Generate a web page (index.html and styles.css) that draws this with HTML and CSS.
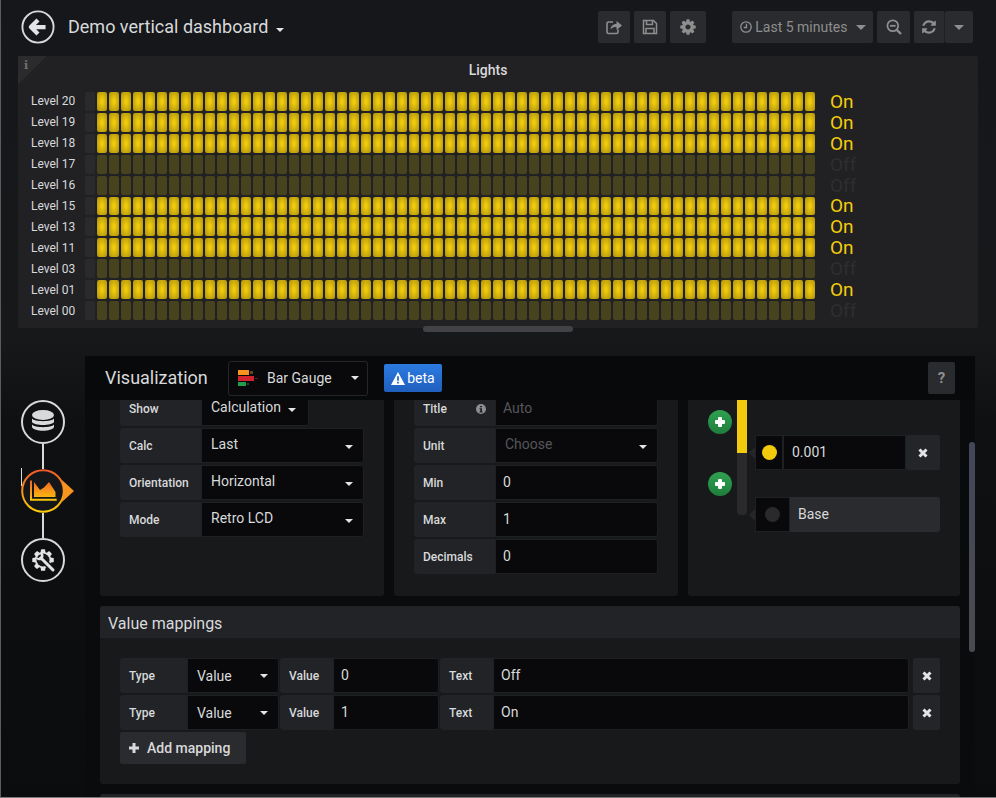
FILE: index.html
```html
<!DOCTYPE html>
<html lang="en">
<head>
    <meta charset="UTF-8">
    <title>Demo vertical dashboard</title>
    <link rel="stylesheet" href="styles.css">
</head>
<body>
    <header class="navbar">
        <svg class="back" width="34" height="34" viewBox="0 0 36 36">
            <circle cx="18" cy="18" r="16.500" fill="none" stroke="#d8d9da" stroke-width="2"/>
            <path d="M18 10.500 L10.500 18 L18 25.500 M11 18 H26" fill="none" stroke="#e3e4e5" stroke-width="4.500" stroke-linejoin="round"/>
        </svg>
        <h1 class="dash-title">Demo vertical dashboard</h1>
        <span class="caret caret-title"></span>
        <div class="nav-group">
            <button class="nav-btn btn-share">
                <svg width="18" height="18" viewBox="0 0 18 18" fill="none" stroke="#8e8e8e" stroke-width="1.600">
                    <path d="M8 4 H3.500 Q2 4 2 5.500 V14 Q2 15.500 3.500 15.500 H11.500 Q13 15.500 13 14 V11.500"/>
                    <path d="M5.500 11.500 C6 7.500 8.500 6 11.500 6 V3 L17 7.500 L11.500 12 V9 C9 9 7 9.500 5.500 11.500 Z" fill="#8e8e8e" stroke="none"/>
                </svg>
            </button>
            <button class="nav-btn btn-save">
                <svg width="16" height="16" viewBox="0 0 16 16" fill="none" stroke="#8e8e8e" stroke-width="1.500">
                    <path d="M1.500 1.500 H11.500 L14.500 4.500 V14.500 H1.500 Z"/>
                    <path d="M4.500 1.500 V5.500 H10.500 V1.500 M4 14.500 V9.500 H12 V14.500"/>
                </svg>
            </button>
            <button class="nav-btn btn-settings">
                <svg width="18" height="18" viewBox="0 0 1792 1792" fill="#8e8e8e"><path d="M1152 896q0-106-75-181t-181-75-181 75-75 181 75 181 181 75 181-75 75-181zm512-109v222q0 12-8 23t-20 13l-185 28q-19 54-39 91 35 50 107 138 10 12 10 25t-9 23q-27 37-99 108t-94 71q-12 0-26-9l-138-108q-44 23-91 38-16 136-29 186-7 28-36 28h-222q-14 0-24.500-8.500t-11.500-21.500l-28-184q-49-16-90-37l-141 107q-10 9-25 9-14 0-25-11-126-114-165-168-7-10-7-23 0-12 8-23 15-21 51-66.500t54-70.500q-27-50-41-99l-183-27q-13-2-21-12.500t-8-23.500v-222q0-12 8-23t19-13l186-28q14-46 39-92-40-57-107-138-10-12-10-24 0-10 9-23 26-36 98.500-107.500t94.500-71.500q13 0 26 10l138 107q44-23 91-38 16-136 29-186 7-28 36-28h222q14 0 24.500 8.500t11.500 21.500l28 184q49 16 90 37l142-107q9-9 24-9 13 0 25 10 129 119 165 170 7 8 7 22 0 12-8 23-15 21-51 66.500t-54 70.500q26 50 41 98l183 28q13 2 21 12.500t8 23.500z"/></svg>
            </button>
        </div>
        <button class="nav-btn btn-time">
            <svg width="12" height="12" viewBox="0 0 12 12" fill="none" stroke="#8e8e8e" stroke-width="1.300">
                <circle cx="6" cy="6" r="5.200"/>
                <path d="M6.500 2.800 V6.500 H3.800"/>
            </svg>
            <span class="time-text">Last 5 minutes</span>
            <span class="caret caret-grey"></span>
        </button>
        <button class="nav-btn btn-zoom">
            <svg width="16" height="16" viewBox="0 0 16 16" fill="none" stroke="#8e8e8e" stroke-width="1.800">
                <circle cx="6.800" cy="6.800" r="5.400"/>
                <path d="M10.800 10.800 L15 15" stroke-width="2.400"/>
                <path d="M4 6.800 H9.600"/>
            </svg>
        </button>
        <div class="refresh-group">
            <button class="nav-btn btn-refresh">
                <svg width="16" height="16" viewBox="0 0 1792 1792" fill="#8e8e8e"><path d="M1639 1056q0 5-1 7-64 268-268 434.500t-478 166.500q-146 0-282.500-55t-243.500-157l-129 129q-19 19-45 19t-45-19-19-45v-448q0-26 19-45t45-19h448q26 0 45 19t19 45-19 45l-137 137q71 66 161 102t187 36q134 0 250-65t186-179q11-17 53-117 8-23 30-23h192q13 0 22.500 9.500t9.500 22.500zm25-800v448q0 26-19 45t-45 19h-448q-26 0-45-19t-19-45 19-45l138-138q-148-137-349-137-134 0-250 65t-186 179q-11 17-53 117-8 23-30 23h-199q-13 0-22.500-9.500t-9.500-22.500v-7q65-268 270-434.500t480-166.500q146 0 284 55.500t245 156.500l130-129q19-19 45-19t45 19 19 45z"/></svg>
            </button>
            <button class="nav-btn btn-interval"><span class="caret caret-grey"></span></button>
        </div>
    </header>

    <section class="panel">
        <div class="panel-corner"><span class="corner-i">i</span></div>
        <h2 class="panel-title">Lights</h2>
        <div class="gauge" id="gauge">
            <div class="gauge-row on"><span class="level">Level 20</span><div class="cells"></div><span class="state">On</span></div>
            <div class="gauge-row on"><span class="level">Level 19</span><div class="cells"></div><span class="state">On</span></div>
            <div class="gauge-row on"><span class="level">Level 18</span><div class="cells"></div><span class="state">On</span></div>
            <div class="gauge-row"><span class="level">Level 17</span><div class="cells"></div><span class="state">Off</span></div>
            <div class="gauge-row"><span class="level">Level 16</span><div class="cells"></div><span class="state">Off</span></div>
            <div class="gauge-row on"><span class="level">Level 15</span><div class="cells"></div><span class="state">On</span></div>
            <div class="gauge-row on"><span class="level">Level 13</span><div class="cells"></div><span class="state">On</span></div>
            <div class="gauge-row on"><span class="level">Level 11</span><div class="cells"></div><span class="state">On</span></div>
            <div class="gauge-row"><span class="level">Level 03</span><div class="cells"></div><span class="state">Off</span></div>
            <div class="gauge-row on"><span class="level">Level 01</span><div class="cells"></div><span class="state">On</span></div>
            <div class="gauge-row"><span class="level">Level 00</span><div class="cells"></div><span class="state">Off</span></div>
        </div>
        <div class="hscroll"></div>
    </section>

    <div class="edit-area">
        <nav class="side">
            <svg class="step" width="44" height="44" viewBox="0 0 44 44">
                <circle cx="22" cy="22" r="21" fill="none" stroke="#d8d9da" stroke-width="2"/>
                <g fill="#d8d9da">
                    <ellipse cx="22" cy="15" rx="11" ry="5"/>
                    <path d="M11 18.500 C13 22 31 22 33 18.500 V22 C31 26 13 26 11 22 Z"/>
                    <path d="M11 24.500 C13 28 31 28 33 24.500 V27 C31 32 13 32 11 27 Z"/>
                </g>
            </svg>
            <div class="step-line"></div>
            <svg class="step step-active" width="44" height="44" viewBox="0 0 44 44">
                <defs>
                    <linearGradient id="orangeGrad" x1="0" y1="0" x2="0" y2="1">
                        <stop offset="0" stop-color="#f05a28"/>
                        <stop offset="1" stop-color="#fbca0a"/>
                    </linearGradient>
                    <linearGradient id="fillGrad" gradientUnits="userSpaceOnUse" x1="0" y1="10" x2="0" y2="32">
                        <stop offset="0" stop-color="#f05a28"/>
                        <stop offset="1" stop-color="#fbca0a"/>
                    </linearGradient>
                </defs>
                <circle cx="22" cy="22" r="20.800" fill="#141619" stroke="url(#orangeGrad)" stroke-width="2"/>
                <path d="M41 11 L53 22 L41 33 Q44 22 41 11 Z" fill="#f7941d"/>
                <path d="M9 11.500 H11 V29.800 H35.700 V31.800 H9 Z" fill="url(#fillGrad)"/>
                <path d="M13 28 V13 L19 21 L23 18.500 L28 13 L34.500 23 V28 Z" fill="url(#fillGrad)"/>
            </svg>
            <div class="step-line"></div>
            <svg class="step" width="44" height="44" viewBox="0 0 44 44">
                <circle cx="22" cy="22" r="21" fill="none" stroke="#d8d9da" stroke-width="2"/>
                <g transform="translate(9.500 9.500) scale(0.0140)" fill="#e3e4e5"><path d="M1152 896q0-106-75-181t-181-75-181 75-75 181 75 181 181 75 181-75 75-181zm512-109v222q0 12-8 23t-20 13l-185 28q-19 54-39 91 35 50 107 138 10 12 10 25t-9 23q-27 37-99 108t-94 71q-12 0-26-9l-138-108q-44 23-91 38-16 136-29 186-7 28-36 28h-222q-14 0-24.500-8.500t-11.500-21.500l-28-184q-49-16-90-37l-141 107q-10 9-25 9-14 0-25-11-126-114-165-168-7-10-7-23 0-12 8-23 15-21 51-66.500t54-70.500q-27-50-41-99l-183-27q-13-2-21-12.500t-8-23.500v-222q0-12 8-23t19-13l186-28q14-46 39-92-40-57-107-138-10-12-10-24 0-10 9-23 26-36 98.500-107.500t94.500-71.500q13 0 26 10l138 107q44-23 91-38 16-136 29-186 7-28 36-28h222q14 0 24.500 8.500t11.500 21.500l28 184q49 16 90 37l142-107q9-9 24-9 13 0 25 10 129 119 165 170 7 8 7 22 0 12-8 23-15 21-51 66.500t-54 70.500q26 50 41 98l183 28q13 2 21 12.500t8 23.500z"/></g>
                <circle cx="22" cy="22" r="6.500" fill="#141619"/>
                <path d="M22 22 L33 33" stroke="#141619" stroke-width="6"/>
                <path d="M20 20 L32 32" stroke="#e3e4e5" stroke-width="3" stroke-linecap="round"/>
                <path d="M17 13.500 A5 5 0 0 0 13.500 17 L16 18.500 L18.500 16 Z M14 18.500 A5 5 0 0 0 20.500 22 L22 20 A5 5 0 0 0 20.500 14 L19 15.500 L20 18 L17.500 20 Z" fill="#e3e4e5"/>
            </svg>
            <div class="text-cursor"></div>
        </nav>

        <div class="editor">
            <div class="editor-head">
                <h2 class="editor-title">Visualization</h2>
                <div class="viz-select">
                    <svg width="24" height="18" viewBox="0 0 24 18">
                        <rect x="1" y="1" width="11" height="5" fill="#f7941d"/>
                        <rect x="13" y="2" width="3" height="3" fill="#5a4a2a"/>
                        <rect x="1" y="7" width="16" height="5" fill="#d3232e"/>
                        <rect x="18" y="9" width="3" height="1" fill="#6a1a1f"/>
                        <rect x="1" y="13" width="8" height="4" fill="#1f9d4d"/>
                        <rect x="10" y="14" width="2" height="2" fill="#1c4a2c"/>
                    </svg>
                    <span class="viz-name">Bar Gauge</span>
                    <span class="caret caret-viz"></span>
                </div>
                <div class="beta">
                    <svg width="14" height="13" viewBox="0 0 14 13"><path fill-rule="evenodd" d="M7 0 L14 13 H0 Z M6.100 4.300 V8.800 H7.900 V4.300 Z M6.100 9.800 V11.500 H7.900 V9.800 Z" fill="#fff"/></svg>
                    <span>beta</span>
                </div>
                <button class="help">?</button>
            </div>

            <div class="editor-scroll">
                <div class="scroll-inner">
                    <div class="option-row">
                        <div class="box box-a">
                            <div class="field field-short"><label>Show</label><div class="value">Calculation <span class="caret"></span></div></div>
                            <div class="field"><label>Calc</label><div class="value">Last<span class="caret caret-end"></span></div></div>
                            <div class="field"><label>Orientation</label><div class="value">Horizontal<span class="caret caret-end"></span></div></div>
                            <div class="field"><label>Mode</label><div class="value">Retro LCD<span class="caret caret-end"></span></div></div>
                        </div>
                        <div class="box box-b">
                            <div class="field">
                                <label>Title
                                    <svg class="info" width="10" height="10" viewBox="0 0 10 10"><circle cx="5" cy="5" r="5" fill="#8e8e8e"/><path d="M4 2 H6 V3.300 H4 Z M3.500 4.300 H6 V7.500 H6.700 V8.400 H3.500 V7.500 H4.200 V5.200 H3.500 Z" fill="#212327"/></svg>
                                </label>
                                <div class="value input placeholder">Auto</div>
                            </div>
                            <div class="field"><label>Unit</label><div class="value placeholder">Choose<span class="caret caret-end"></span></div></div>
                            <div class="field"><label>Min</label><div class="value input">0</div></div>
                            <div class="field"><label>Max</label><div class="value input">1</div></div>
                            <div class="field"><label>Decimals</label><div class="value input">0</div></div>
                        </div>
                        <div class="box box-c">
                            <div class="adders">
                                <span class="add-circle"></span>
                                <span class="add-circle"></span>
                            </div>
                            <div class="threshold-bar"><div class="threshold-on"></div></div>
                            <div class="threshold-items">
                                <div class="threshold">
                                    <div class="swatch swatch-small"><span class="dot dot-yellow"></span></div>
                                    <div class="value input threshold-input">0.001</div>
                                    <button class="del"><svg class="x" width="10" height="10" viewBox="0 0 10 10"><path d="M1.500 1.500 L8.500 8.500 M8.500 1.500 L1.500 8.500"/></svg></button>
                                </div>
                                <div class="threshold">
                                    <div class="swatch"><span class="dot dot-base"></span></div>
                                    <div class="base-label">Base</div>
                                </div>
                            </div>
                        </div>
                    </div>

                    <div class="section">
                        <h3 class="section-head">Value mappings</h3>
                        <div class="section-body">
                            <div class="mapping">
                                <label class="l-type">Type</label>
                                <div class="value v-type">Value<span class="caret caret-end"></span></div>
                                <label class="l-value">Value</label>
                                <div class="value input v-value">0</div>
                                <label class="l-text">Text</label>
                                <div class="value input v-text">Off</div>
                                <button class="del"><svg class="x" width="10" height="10" viewBox="0 0 10 10"><path d="M1.500 1.500 L8.500 8.500 M8.500 1.500 L1.500 8.500"/></svg></button>
                            </div>
                            <div class="mapping">
                                <label class="l-type">Type</label>
                                <div class="value v-type">Value<span class="caret caret-end"></span></div>
                                <label class="l-value">Value</label>
                                <div class="value input v-value">1</div>
                                <label class="l-text">Text</label>
                                <div class="value input v-text">On</div>
                                <button class="del"><svg class="x" width="10" height="10" viewBox="0 0 10 10"><path d="M1.500 1.500 L8.500 8.500 M8.500 1.500 L1.500 8.500"/></svg></button>
                            </div>
                            <button class="add-mapping">
                                <svg width="12" height="12" viewBox="0 0 12 12"><path d="M6 1 V11 M1 6 H11" stroke="#d8d9da" stroke-width="3"/></svg>
                                Add mapping
                            </button>
                        </div>
                    </div>

                    <div class="section section-next"></div>
                </div>
                <div class="vscroll"></div>
            </div>
        </div>
    </div>

    <script src="script.js"></script>
</body>
</html>
```

FILE: styles.css
```css
* {
    box-sizing: border-box;
}
html, body {
    height: 100%;
}
body {
    margin: 0;
    height: 798px;
    overflow: hidden;
    font-family: Roboto, "Liberation Sans", sans-serif;
    font-size: 14px;
    color: #d8d9da;
    background: linear-gradient(to bottom, #15171a 0, #17181a 340px, #0f1012 420px, #0b0c0e 100%);
    border-left: 1px solid #5c5c5c;
    border-bottom: 1px solid #7a7a7a;
}
button {
    font-family: inherit;
    border: none;
    padding: 0;
    cursor: pointer;
}
h1, h2, h3 {
    margin: 0;
    font-weight: 400;
}

/* carets */
.caret {
    display: inline-block;
    width: 0;
    height: 0;
    border-left: 4px solid transparent;
    border-right: 4px solid transparent;
    border-top: 4px solid #e3e4e5;
}
.caret-title {
    margin: 6px 0 0 8px;
}
.caret-grey {
    border-top-color: #8e8e8e;
    border-left-width: 5px;
    border-right-width: 5px;
    border-top-width: 5px;
}
.caret-end {
    margin-left: auto;
}

/* top bar */
.navbar {
    height: 56px;
    display: flex;
    align-items: center;
    padding: 0 0 2px 20px;
}
.back {
    margin-right: 13px;
}
.dash-title {
    font-size: 18px;
    line-height: 1;
    color: #d8d9da;
}
.nav-group {
    display: flex;
    gap: 4px;
    margin-left: 314px;
}
.nav-btn {
    height: 32px;
    display: flex;
    align-items: center;
    justify-content: center;
    background: #2a2b2e;
    border-radius: 2px;
    color: #8e8e8e;
}
.btn-share, .btn-save {
    width: 32px;
}
.btn-settings {
    width: 36px;
}
.btn-time {
    width: 141px;
    margin-left: 26px;
    gap: 3px;
    font-size: 14px;
    justify-content: flex-start;
    padding-left: 8px;
}
.btn-time .caret {
    margin-left: 6px;
}
.btn-zoom {
    width: 33px;
    margin-left: 4px;
}
.refresh-group {
    display: flex;
    margin-left: 4px;
}
.btn-refresh {
    width: 31px;
    border-right: 1px solid #1f2023;
}
.btn-interval {
    width: 28px;
}

/* lights panel */
.panel {
    position: relative;
    width: 960px;
    height: 272px;
    margin-left: 17px;
    background: #212124;
    border-radius: 2px;
}
.panel-corner {
    position: absolute;
    left: 0;
    top: 0;
    width: 28px;
    height: 28px;
    background: linear-gradient(135deg, #2b2b2e 50%, transparent 50%);
}
.corner-i {
    position: absolute;
    left: 6px;
    top: 3px;
    font-family: "DejaVu Serif", serif;
    font-size: 11px;
    font-weight: 700;
    color: #6f7072;
}
.panel-title {
    height: 36px;
    padding: 6px 20px 0 0;
    text-align: center;
    font-size: 14px;
    font-weight: 500;
    line-height: 16px;
}
.gauge {
    display: flex;
    flex-direction: column;
    gap: 2px;
    height: 228px;
}
.gauge-row {
    display: flex;
    flex: 1;
    min-height: 0;
    align-items: center;
}
.level {
    width: 67px;
    padding-left: 13px;
    font-size: 12px;
    line-height: 18px;
}
.cells {
    display: flex;
    gap: 2px;
    height: 100%;
}
.cell {
    width: 10px;
    height: 100%;
    border-radius: 2px;
    background: #48431f;
}
.cell:first-child, .gauge-row.on .cell:first-child {
    background: #2a2a2c;
}
.gauge-row.on .cell {
    background: radial-gradient(ellipse 7px 14px at center, #f2cc0c 10%, #a88e0e 100%);
}
.state {
    margin-left: 15px;
    font-size: 19px;
    line-height: 19px;
    color: #2e2e30;
}
.gauge-row.on .state {
    color: #f2cc0c;
}
.hscroll {
    position: absolute;
    left: 405px;
    top: 270px;
    width: 150px;
    height: 6px;
    border-radius: 3px;
    background: #434347;
}

/* editor */
.edit-area {
    display: flex;
    margin-top: 28px;
}
.side {
    position: relative;
    width: 84px;
    padding-top: 44px;
    display: flex;
    flex-direction: column;
    align-items: center;
}
.step {
    display: block;
    flex: none;
    overflow: visible;
}
.step-line {
    width: 2px;
    height: 25px;
    flex: none;
    background: #d8d9da;
}
.text-cursor {
    position: absolute;
    left: 20px;
    top: 112px;
    width: 1px;
    height: 18px;
    background: #d8d9da;
}
.editor {
    width: 890px;
    height: 441px;
    background: #0a0b0d;
    border-radius: 3px 3px 0 0;
}
.editor-head {
    height: 44px;
    display: flex;
    align-items: center;
    padding: 0 20px;
    background: #08090b;
}
.editor-title {
    font-size: 18px;
    width: 103px;
    padding-bottom: 2px;
    white-space: nowrap;
}
.viz-select {
    width: 140px;
    height: 35px;
    margin-left: 20px;
    padding-left: 8px;
    display: flex;
    align-items: center;
    background: #09090b;
    border: 1px solid #262628;
    border-radius: 3px;
}
.viz-name {
    margin-left: 6px;
}
.caret-viz {
    margin-left: auto;
    margin-right: 8px;
}
.beta {
    width: 58px;
    height: 28px;
    margin-left: 16px;
    display: flex;
    align-items: center;
    justify-content: center;
    gap: 2px;
    color: #fff;
    background: linear-gradient(to bottom, #2c7be0, #1f5fbe);
    border-radius: 2px;
}
.help {
    width: 27px;
    height: 32px;
    margin-left: auto;
    background: #2a2b2e;
    color: #8e8e8e;
    font-size: 15px;
    font-weight: 700;
    border-radius: 2px;
}
.editor-scroll {
    position: relative;
    height: 397px;
    overflow: hidden;
    padding: 0 15px;
}
.scroll-inner {
    margin-top: -29px;
}
.vscroll {
    position: absolute;
    right: 0;
    top: 42px;
    width: 6px;
    height: 210px;
    border-radius: 3px;
    background: linear-gradient(to bottom, #44465a, #4a4b50);
}
.option-row {
    display: flex;
    gap: 10px;
    height: 225px;
}
.box {
    background: #17191b;
    border-radius: 3px;
    padding: 20px;
    display: flex;
    flex-direction: column;
    gap: 2px;
}
.box-a, .box-b {
    width: 284px;
}
.box-c {
    width: 272px;
    flex-direction: row;
    gap: 5px;
}
.field {
    display: flex;
    height: 35px;
}
.field-short {
    width: 189px;
}
.field label {
    display: flex;
    align-items: center;
    width: 81px;
    flex: none;
}
.box-b .field label {
    justify-content: space-between;
    padding-right: 9px;
}
.info {
    flex: none;
}
label, .field label {
    padding-left: 9px;
    font-size: 12px;
    font-weight: 500;
    background: #212327;
    border-radius: 3px 0 0 3px;
}
.value {
    flex: 1;
    display: flex;
    align-items: center;
    padding: 0 10px 3px 9px;
    background: #09090b;
    border: 1px solid #1f2023;
    border-radius: 0 3px 3px 0;
    font-size: 14px;
}
.value.input {
    padding: 0 10px 1px 7px;
}
.value .caret {
    margin-top: 5px;
}
.field-short .caret {
    margin-left: 7px;
}
.placeholder {
    color: #555659;
}

/* thresholds */
.adders {
    display: flex;
    flex-direction: column;
    gap: 38px;
    padding-top: 19px;
    width: 24px;
}
.add-circle {
    position: relative;
    display: block;
    width: 24px;
    height: 24px;
    flex: none;
    border-radius: 50%;
    background: linear-gradient(to bottom, #2fa150, #1f7d3c);
}
.add-circle::before, .add-circle::after {
    content: "";
    position: absolute;
    background: #fff;
    border-radius: 1px;
}
.add-circle::before {
    left: 7px;
    top: 10px;
    width: 10px;
    height: 4px;
}
.add-circle::after {
    left: 10px;
    top: 7px;
    width: 4px;
    height: 10px;
}
.threshold-bar {
    width: 10px;
    height: 124px;
    background: #2a2a2c;
    border-radius: 0 0 4px 4px;
    overflow: hidden;
}
.threshold-on {
    height: 62px;
    background: #f2cc0c;
}
.threshold-items {
    display: flex;
    flex-direction: column;
    gap: 27px;
    margin-left: 3px;
    padding-top: 44px;
}
.threshold {
    position: relative;
    display: flex;
    width: 185px;
    height: 35px;
}
.threshold::before {
    content: "";
    position: absolute;
    left: -6px;
    top: 12px;
    border-top: 6px solid transparent;
    border-bottom: 6px solid transparent;
    border-right: 6px solid #26272a;
}
.swatch {
    width: 35px;
    flex: none;
    display: flex;
    align-items: center;
    justify-content: center;
    background: #09090b;
    border: 1px solid #1f2023;
}
.swatch-small {
    width: 28px;
}
.dot {
    width: 15px;
    height: 15px;
    border-radius: 50%;
}
.dot-yellow {
    background: #f2cc0c;
}
.dot-base {
    background: #2a2a2c;
}
.value.threshold-input {
    border-radius: 0;
    padding-left: 8px;
}
.threshold .del {
    width: 34px;
}
.base-label {
    flex: 1;
    display: flex;
    align-items: center;
    padding: 0 0 1px 8px;
    background: #2a2b2e;
    border-radius: 0 3px 3px 0;
}
.del {
    display: flex;
    align-items: center;
    justify-content: center;
    flex: none;
    background: #232529;
    border-radius: 2px;
}
.x {
    stroke: #e3e4e5;
    stroke-width: 3;
    fill: none;
}

/* value mappings */
.section {
    margin-top: 10px;
    background: #17191b;
    border-radius: 3px;
}
.section-head {
    height: 32px;
    padding-left: 8px;
    font-size: 16px;
    line-height: 35px;
    background: #212327;
    border-radius: 3px 3px 0 0;
}
.section-body {
    height: 146px;
    padding: 20px 20px 0;
}
.mapping {
    display: flex;
    height: 35px;
    margin-bottom: 2px;
}
.mapping label {
    display: flex;
    align-items: center;
    flex: none;
}
.l-type {
    width: 67px;
}
.v-type {
    flex: none;
    width: 92px;
    margin-right: 1px;
    padding-bottom: 0;
}
.v-type .caret {
    margin-top: 0;
}
.l-value {
    width: 53px;
}
.v-value {
    flex: none;
    width: 106px;
    margin-right: 1px;
}
.l-text {
    width: 53px;
}
.v-text {
    flex: none;
    width: 416px;
}
.mapping .del {
    width: 27px;
    margin-left: 4px;
}
.add-mapping {
    display: flex;
    align-items: center;
    gap: 7px;
    width: 126px;
    height: 32px;
    padding-left: 8px;
    background: #2a2b2e;
    color: #d8d9da;
    font-size: 14px;
    font-weight: 500;
    border-radius: 2px;
}
.section-next {
    height: 40px;
    background: #212327;
}
```

FILE: script.js
```js
// fill each gauge row with its LCD cells
const CELL_COUNT = 61;

document.querySelectorAll('#gauge .cells').forEach((row) => {
    for (let i = 0; i < CELL_COUNT; i++) {
        const cell = document.createElement('div');
        cell.className = 'cell';
        row.appendChild(cell);
    }
});
```
